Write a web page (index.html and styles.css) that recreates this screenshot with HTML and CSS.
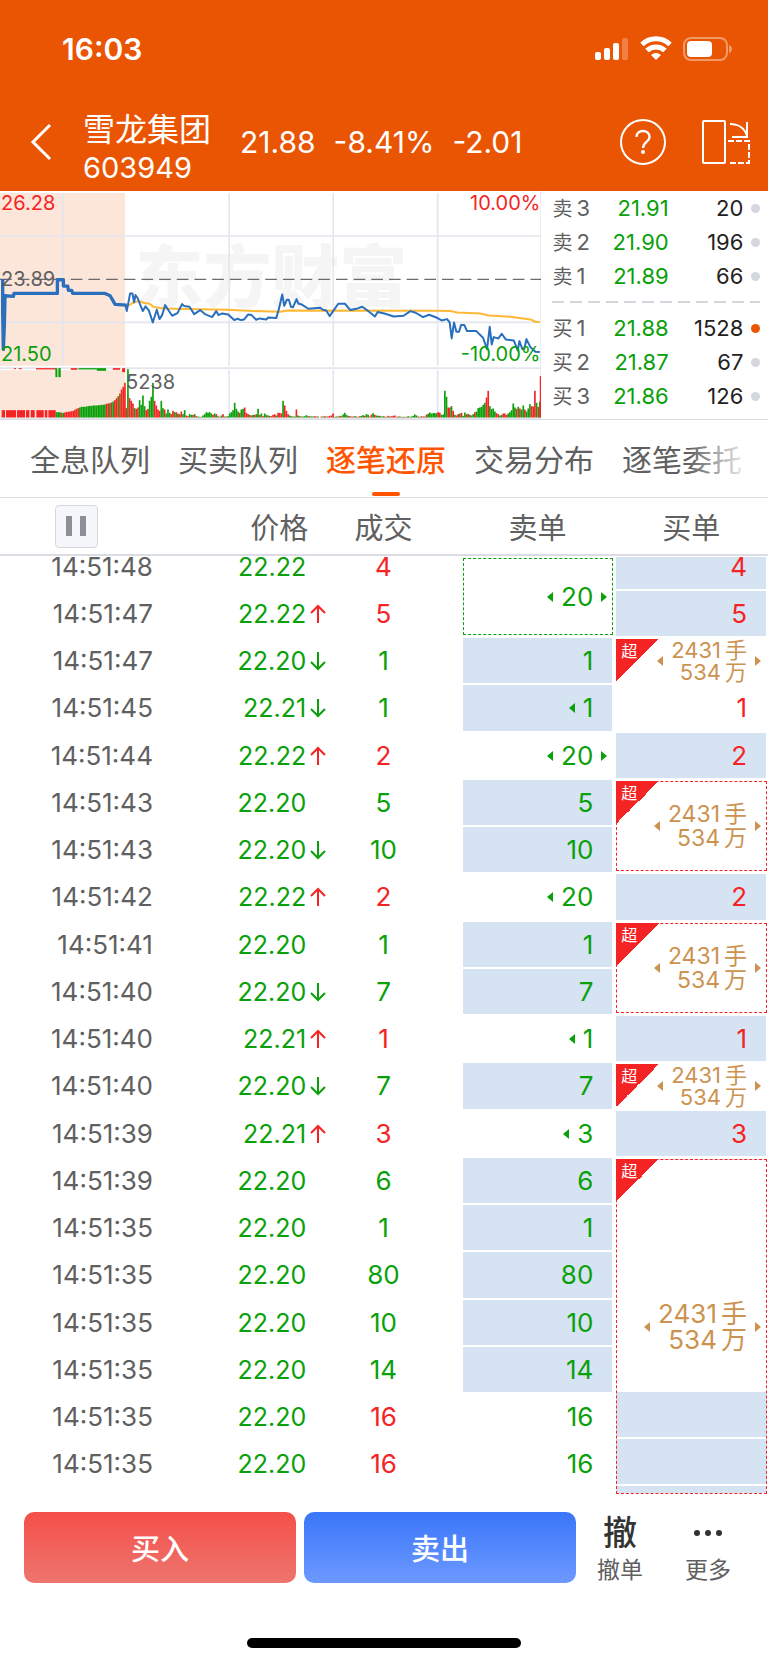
FILE: index.html
```
<!DOCTYPE html>
<html lang="zh-CN">
<head>
  <meta charset="UTF-8">
  <meta name="viewport" content="width=device-width, initial-scale=1.0">
  <title>雪龙集团 603949</title>
  <link rel="stylesheet" href="styles.css">
</head>
<body>
  <svg width="0" height="0" class="symbols" aria-hidden="true">
    <symbol id="up" viewBox="0 0 16 20"><path d="M8 19V2M1 9l7-7 7 7" fill="none" stroke="currentColor" stroke-width="2"/></symbol>
    <symbol id="down" viewBox="0 0 16 20"><path d="M8 1v17M1 11l7 7 7-7" fill="none" stroke="currentColor" stroke-width="2"/></symbol>
  </svg>

  <header class="header">
    <div class="status-bar">
      <span class="clock">16:03</span>
      <svg width="138" height="26" viewBox="0 0 138 26" fill="#fff" aria-hidden="true">
        <rect x="1" y="16" width="6" height="8" rx="2"/>
        <rect x="10" y="12" width="6" height="12" rx="2"/>
        <rect x="19" y="7" width="6" height="17" rx="2"/>
        <rect x="28" y="2" width="6" height="22" rx="2" opacity=".25"/>
        <g fill="none" stroke="#fff" stroke-width="5">
          <path d="M48 8.500a20 20 0 0 1 28 0"/>
          <path d="M53 14.500a13 13 0 0 1 18 0"/>
        </g>
        <path d="M62 24l-5-5a7 7 0 0 1 10 0z"/>
        <rect x="90" y="2" width="43" height="22" rx="7" fill="none" stroke="#fff" stroke-width="2" opacity=".4"/>
        <rect x="93" y="5" width="25" height="16" rx="4"/>
        <path d="M135 9q3 1 3 4t-3 4z" opacity=".4"/>
      </svg>
    </div>
    <div class="title-bar">
      <a class="back" href="#" aria-label="返回">
        <svg width="22" height="38" viewBox="0 0 22 38"><path d="M20 2L3 19l17 17" fill="none" stroke="#fff" stroke-width="3"/></svg>
      </a>
      <h1 class="stock">雪龙集团<span>603949</span></h1>
      <div class="quote"><span>21.88</span><span>-8.41%</span><span>-2.01</span></div>
      <button class="icon-btn" aria-label="帮助">
        <svg width="46" height="46" viewBox="0 0 46 46" fill="none" stroke="#fff" stroke-width="2">
          <circle cx="23" cy="23" r="22"/>
          <path d="M16.500 18c0-8 13-8 13 0 0 5-6.500 5-6.500 11" stroke-width="2.400"/>
          <circle cx="23" cy="33" r="1" fill="#fff"/>
        </svg>
      </button>
      <button class="icon-btn" aria-label="横屏">
        <svg width="48" height="46" viewBox="0 0 48 46" fill="none" stroke="#fff" stroke-width="2">
          <rect x="1" y="2" width="22" height="42" rx="1"/>
          <path d="M28 5c9 0 15 5 17 12M45 3v15H30"/>
          <path d="M26 22h21v22H26" stroke-dasharray="6 2"/>
        </svg>
      </button>
    </div>
  </header>

  <main>
    <section class="market">
      <div class="chart">
        <span class="watermark">东方财富</span>
        <svg viewBox="0 18 1623 684" aria-hidden="true">
          <g fill="#fce5d9">
            <path d="M0 24h375v518H0zM0 555h375v142H0z"/>
          </g>
          <g stroke="#e3e6ee" stroke-width="5">
            <path d="M188 24v518M687 24v518M999 24v518M1312 24v518M687 555v142M999 555v142M1312 555v142"/>
            <path d="M0 153h1623M0 412h1623M0 549h1623M0 700h1623M1622 18v684"/>
          </g>
          <path d="M0 283h1623" stroke="#6b6b6b" stroke-width="4" stroke-dasharray="35 18"/>
          <g id="volume"></g>
          <g fill="none" stroke-linejoin="round">
            <polyline stroke="#ffb833" stroke-width="6" points="385,362 400,352 416,348 430,353 448,356 462,366 490,370 560,372 680,374 760,378 840,380 862,376 1310,377 1350,378 1370,382 1440,385 1465,391 1530,395 1590,403 1605,410 1618,411"/>
            <polyline stroke="#2a6fbd" stroke-width="10" points="8,282 8,380 10,493 13,422 15,332 40,334 42,325 172,325 172,284 190,284 190,303 203,303 205,316 215,316 218,325 315,325 330,332 345,358 380,360"/>
            <polyline stroke="#2a6fbd" stroke-width="6" points="376,360 380,378 390,325 397,325 402,352 406,330 412,338 428,378 436,364 446,376 458,412 470,374 478,402 486,390 495,360 504,374 516,392 532,384 546,357 552,363 568,365 582,387 600,375 616,388 636,396 648,378 655,390 666,385 684,388 702,405 712,401 722,405 732,403 744,388 754,390 768,404 778,400 798,403 804,397 828,399 836,372 846,328 852,362 860,344 866,344 872,365 878,367 889,342 894,355 904,358 924,371 960,368 968,374 978,376 988,393 998,379 1014,356 1034,356 1050,375 1072,370 1086,365 1100,375 1124,394 1132,381 1155,386 1180,394 1210,392 1230,378 1246,383 1268,396 1286,389 1310,398 1324,406 1340,402 1348,412 1354,460 1361,412 1368,440 1376,440 1382,420 1392,420 1400,438 1428,438 1448,458 1460,492 1468,425 1474,478 1480,456 1494,460 1504,446 1516,463 1540,466 1552,496 1557,468 1566,492 1572,490 1578,462 1590,486 1605,500 1618,501"/>
          </g>
        </svg>
        <span class="label high">26.28</span>
        <span class="label mid">23.89</span>
        <span class="label low">21.50</span>
        <span class="label rise">10.00%</span>
        <span class="label fall">-10.00%</span>
        <span class="label vol">5238</span>
      </div>

      <table class="book">
        <colgroup><col class="b-level"><col class="b-value"><col class="b-value"><col class="b-dot"></colgroup>
        <tbody>
          <tr><th>卖<span>3</span></th><td class="green">21.91</td><td>20</td><td><i class="dot"></i></td></tr>
          <tr><th>卖<span>2</span></th><td class="green">21.90</td><td>196</td><td><i class="dot"></i></td></tr>
          <tr><th>卖<span>1</span></th><td class="green">21.89</td><td>66</td><td><i class="dot"></i></td></tr>
          <tr class="split"><td colspan="4"><hr></td></tr>
          <tr><th>买<span>1</span></th><td class="green">21.88</td><td>1528</td><td><i class="dot hot"></i></td></tr>
          <tr><th>买<span>2</span></th><td class="green">21.87</td><td>67</td><td><i class="dot"></i></td></tr>
          <tr><th>买<span>3</span></th><td class="green">21.86</td><td>126</td><td><i class="dot"></i></td></tr>
        </tbody>
      </table>
    </section>

    <nav class="tabs">
      <a href="#">全息队列</a>
      <a href="#">买卖队列</a>
      <a href="#" class="active">逐笔还原</a>
      <a href="#">交易分布</a>
      <a href="#">逐笔委托</a>
    </nav>

    <table class="ticks">
      <colgroup><col class="c-time"><col class="c-price"><col class="c-deal"><col class="c-order"><col class="c-order"></colgroup>
      <thead>
        <tr>
          <th class="time"><button class="pause" aria-label="暂停"></button></th>
          <th class="price">价格</th>
          <th class="deal">成交</th>
          <th>卖单</th>
          <th>买单</th>
        </tr>
      </thead>
      <tbody>
        <tr class="first"><td class="time">14:51:48</td><td class="price">22.22</td><td class="deal red">4</td><td class="group green" rowspan="2"><span class="qty prev next">20</span></td><td class="fill red"><span class="qty">4</span></td></tr>
        <tr><td class="time">14:51:47</td><td class="price">22.22<svg class="red"><use href="#up"/></svg></td><td class="deal red">5</td><td class="fill red"><span class="qty">5</span></td></tr>
        <tr><td class="time">14:51:47</td><td class="price">22.20<svg><use href="#down"/></svg></td><td class="deal green">1</td><td class="fill green"><span class="qty">1</span></td><td class="super"><b class="flag">超</b><span class="qty prev next small"><span>2431<u>手</u><br>534<u>万</u></span></span></td></tr>
        <tr><td class="time">14:51:45</td><td class="price">22.21<svg><use href="#down"/></svg></td><td class="deal green">1</td><td class="fill green"><span class="qty prev">1</span></td><td class="red"><span class="qty">1</span></td></tr>
        <tr><td class="time">14:51:44</td><td class="price">22.22<svg class="red"><use href="#up"/></svg></td><td class="deal red">2</td><td class="green"><span class="qty prev next">20</span></td><td class="fill red"><span class="qty">2</span></td></tr>
        <tr><td class="time">14:51:43</td><td class="price">22.20</td><td class="deal green">5</td><td class="fill green"><span class="qty">5</span></td><td class="group super" rowspan="2"><b class="flag">超</b><span class="qty prev next medium"><span>2431<u>手</u><br>534<u>万</u></span></span></td></tr>
        <tr><td class="time">14:51:43</td><td class="price">22.20<svg><use href="#down"/></svg></td><td class="deal green">10</td><td class="fill green"><span class="qty">10</span></td></tr>
        <tr><td class="time">14:51:42</td><td class="price">22.22<svg class="red"><use href="#up"/></svg></td><td class="deal red">2</td><td class="green"><span class="qty prev">20</span></td><td class="fill red"><span class="qty">2</span></td></tr>
        <tr><td class="time">14:51:41</td><td class="price">22.20</td><td class="deal green">1</td><td class="fill green"><span class="qty">1</span></td><td class="group super" rowspan="2"><b class="flag">超</b><span class="qty prev next medium"><span>2431<u>手</u><br>534<u>万</u></span></span></td></tr>
        <tr><td class="time">14:51:40</td><td class="price">22.20<svg><use href="#down"/></svg></td><td class="deal green">7</td><td class="fill green"><span class="qty">7</span></td></tr>
        <tr><td class="time">14:51:40</td><td class="price">22.21<svg class="red"><use href="#up"/></svg></td><td class="deal red">1</td><td class="green"><span class="qty prev">1</span></td><td class="fill red"><span class="qty">1</span></td></tr>
        <tr><td class="time">14:51:40</td><td class="price">22.20<svg><use href="#down"/></svg></td><td class="deal green">7</td><td class="fill green"><span class="qty">7</span></td><td class="super"><b class="flag">超</b><span class="qty prev next small"><span>2431<u>手</u><br>534<u>万</u></span></span></td></tr>
        <tr><td class="time">14:51:39</td><td class="price">22.21<svg class="red"><use href="#up"/></svg></td><td class="deal red">3</td><td class="green"><span class="qty prev">3</span></td><td class="fill red"><span class="qty">3</span></td></tr>
        <tr><td class="time">14:51:39</td><td class="price">22.20</td><td class="deal green">6</td><td class="fill green"><span class="qty">6</span></td><td class="group super tail" rowspan="8"><b class="flag">超</b><span class="qty prev next large"><span>2431<u>手</u><br>534<u>万</u></span></span></td></tr>
        <tr><td class="time">14:51:35</td><td class="price">22.20</td><td class="deal green">1</td><td class="fill green"><span class="qty">1</span></td></tr>
        <tr><td class="time">14:51:35</td><td class="price">22.20</td><td class="deal green">80</td><td class="fill green"><span class="qty">80</span></td></tr>
        <tr><td class="time">14:51:35</td><td class="price">22.20</td><td class="deal green">10</td><td class="fill green"><span class="qty">10</span></td></tr>
        <tr><td class="time">14:51:35</td><td class="price">22.20</td><td class="deal green">14</td><td class="fill green"><span class="qty">14</span></td></tr>
        <tr><td class="time">14:51:35</td><td class="price">22.20</td><td class="deal red">16</td><td class="green"><span class="qty">16</span></td></tr>
        <tr><td class="time">14:51:35</td><td class="price">22.20</td><td class="deal red">16</td><td class="green"><span class="qty">16</span></td></tr>
        <tr class="last"><td colspan="4"></td></tr>
      </tbody>
    </table>
  </main>

  <footer class="actions">
    <button class="trade buy">买入</button>
    <button class="trade sell">卖出</button>
    <a class="action" href="#"><strong>撤</strong>撤单</a>
    <a class="action" href="#">
      <svg width="34" height="38" viewBox="0 0 34 38" fill="#333" aria-hidden="true"><circle cx="6" cy="19" r="3"/><circle cx="17" cy="19" r="3"/><circle cx="28" cy="19" r="3"/></svg>更多
    </a>
  </footer>
  <div class="home-indicator"></div>

  <script>
    const svgNs = "http://www.w3.org/2000/svg";
    const volume = document.getElementById("volume");
    const colors = { r: "#f52424", g: "#0aa00a", b: "#8a6414" };
    const baseline = 697;

    function addBar(x, y, height, color, width = 5) {
      const bar = document.createElementNS(svgNs, "rect");
      bar.setAttribute("x", x);
      bar.setAttribute("y", y);
      bar.setAttribute("width", width);
      bar.setAttribute("height", height);
      bar.setAttribute("fill", colors[color]);
      volume.appendChild(bar);
    }

    // each run starts at x and puts one bar every 5 units
    function addRun(x, text) {
      text.split(" ").forEach((item, i) => {
        const height = Number(item.slice(1));
        addBar(x + i * 5, baseline - height, height, item[0]);
      });
    }

    // call auction
    [[5, 10], [18, 30], [51, 24], [78, 10], [92, 12], [109, 22], [134, 8], [145, 22]].forEach(([x, w]) => addBar(x, 675, 22, "r", w));
    addRun(167, "g16 g16 g16 r14 g14 r15 r17 r17 r18 r19 r20 r23 r26 r28 g30 g32 g32 g32 g33 g34 g35 g35 g36 g36 g36 g37 g37 g38 g38 g39 r41 r42 g43 r45 g48 r52 r58 b64 b72 r84 r92 r104");
    [[42, 6, 3], [56, 9, 3], [108, 60, 4], [212, 20, 5], [338, 22, 5]].forEach(([x, w, h]) => addBar(x, 549, h, "r", w));
    [[166, 6, 27], [175, 7, 27], [235, 55, 4], [290, 28, 8]].forEach(([x, w, h]) => addBar(x, 549, h, "g", w));
    addBar(366, 549, 12, "r", 9);

    // trading session
    addRun(376, "r28 g145 r58 r50 r42 g28 r26 r30 g52 g38 g66 g34 r22 r26 g50 g62 g104 r50 r36 r24 r20 g50 g28 r24 g12 g24 g14 r10 r20 g16 r16 g12 r10 r18 g10 g22 r6 r4 g10 g8 r8 g10 r4 g3 g2 r2 g6 g10 g16 g14 g16 g12 r8 g12 r10 g4 r2 g6 r10 g3 r3 g4 g12 g16 g22 g44 g26 g18 r14 g24 g26 r30 r14 r10 g8 r6 g8 r8 g10 g26 r8 g12 r4 g12 g8 r6 g5 r4 r8 r10 g6 r14 r14 r12 g50 r36 r20 r10 g6 g4 g3 g3 r24 g6 g4 r3 g3 g4 g7 g4 r4 g3 g3 r4 r3 g3");
    addRun(961, "r3 g3 r4 g3 r3 r5 r6 r12 g2 g3 r3 g5 r4 g9 g14 g8 r5 g4 r3 r3 g4 g3 r2 r4 g5 g7 r5 g10 g8 r3 r9 g13 r8 g6 g5 r5 g3 g4 r3 g2 r5 g3 r4 r5 r6 g2 r3 g3 r2 g2 g2 r2 g4 r2 g3 g5 g9 g6 r3 g2 r4 r3 g3 r9 g11 g15 g12 g13 g13 g13 r16 r14 g8 g9 g80 g62 r30 r30 g34 r20 g8 r6 r10 g12 r14 g5 g15 r10 g11 r8 g6 g10 r16 g18 g28 g30 g32 g38 g44 r60 r80 g34 g25 g27 g18 r13 r10 g6 g8 r12 r12 r8 g12 g16 g22 g42 g30 r26 g32 r27 g24 g36 r24 g18 g27 g40 r34 r33 r80 g44 r32 g48 g88 g94 g108");
    addBar(1618, 573, 124, "r");
  </script>
</body>
</html>
```
FILE: styles.css
```
*,
*::before,
*::after {
  box-sizing: border-box;
}

body {
  margin: 0;
  background: #fff;
  color: #606060;
  font-family: Inter, "Noto Sans CJK SC", sans-serif;
  font-size: 26px;
}

a {
  color: inherit;
  text-decoration: none;
}

button {
  font-family: inherit;
  border: none;
  cursor: pointer;
}

table {
  border-collapse: separate;
  border-spacing: 0;
  table-layout: fixed;
}

th {
  font-weight: 400;
}

.symbols {
  position: absolute;
}

.red {
  color: #f52424;
}

.green {
  color: #0aa00a;
}

/* header */
.header {
  background: #ea5504;
  color: #fff;
}

.status-bar {
  display: flex;
  justify-content: space-between;
  align-items: center;
  height: 98px;
  padding: 0 36px 0 62px;
}

.clock {
  font-size: 30px;
  font-weight: 600;
}

.title-bar {
  display: flex;
  align-items: center;
  height: 93px;
  padding: 0 18px 6px 30px;
}

.back {
  display: flex;
  margin-right: 31px;
}

.stock {
  margin: 12px 0 0;
  font-size: 32px;
  font-weight: 400;
  line-height: 40px;
}

.stock span {
  display: block;
  font-size: 29px;
  line-height: 36px;
}

.quote {
  display: flex;
  flex: 1;
  gap: 18px;
  margin-left: 29px;
  font-size: 30px;
}

.icon-btn {
  display: flex;
  margin-left: 34px;
  padding: 0;
  background: none;
}

.icon-btn:last-child {
  margin-left: 36px;
}

/* chart and order book */
.market {
  display: flex;
  align-items: flex-start;
  border-bottom: 1px solid #dcdce4;
}

.chart {
  position: relative;
  width: 70.5%;
}

.chart svg {
  position: relative;
  display: block;
  width: 100%;
}

.watermark {
  position: absolute;
  top: 36px;
  left: 25%;
  color: #f5f5f5;
  font-size: 68px;
  font-weight: 900;
  line-height: 100px;
}

.label {
  position: absolute;
  left: 1px;
  font-size: 20px;
  line-height: 24px;
}

.label.high {
  top: 0;
  color: #f52424;
}

.label.mid {
  top: 76px;
}

.label.low {
  top: 151px;
  color: #0aa00a;
}

.label.rise {
  top: 0;
  right: 1px;
  left: auto;
  color: #f52424;
}

.label.fall {
  top: 151px;
  right: 1px;
  left: auto;
  color: #0aa00a;
}

.label.vol {
  top: 179px;
  left: 126px;
}

.book {
  width: 29.5%;
  padding: 0 8px 0 11px;
  color: #222;
  font-size: 22px;
  text-align: right;
}

.b-level {
  width: 20%;
}

.b-value {
  width: 36%;
}

.b-dot {
  width: 8%;
}

.book tr {
  height: 34px;
}

.book th,
.book td {
  padding: 0;
  line-height: 32px;
}

.book th {
  color: #606060;
  font-size: 20px;
  text-align: left;
}

.book th span {
  padding-left: 4px;
  font-size: 22px;
}

.book .green {
  color: #0aa00a;
}

.book .split {
  height: 18px;
}

.book .split td {
  line-height: 2px;
}

.book hr {
  height: 2px;
  margin: 0;
  border: none;
  background: repeating-linear-gradient(90deg, #d5d5de 0 12px, transparent 12px 18px);
}

.dot {
  display: block;
  width: 9px;
  height: 9px;
  margin-left: auto;
  border-radius: 50%;
  background: #d4d7de;
}

.dot.hot {
  background: #ea5504;
}

/* tabs */
.tabs {
  position: relative;
  display: flex;
  gap: 28px;
  height: 77px;
  padding-left: 30px;
  overflow: hidden;
  font-size: 30px;
  line-height: 80px;
  white-space: nowrap;
}

.tabs::after {
  content: "";
  position: absolute;
  top: 0;
  right: 0;
  width: 80px;
  height: 100%;
  background: linear-gradient(90deg, transparent, #fff 80%);
}

.tabs a {
  position: relative;
}

.tabs .active {
  color: #ff5500;
  font-weight: 500;
}

.tabs .active::after {
  content: "";
  position: absolute;
  bottom: 1px;
  left: 50%;
  width: 28px;
  height: 4px;
  margin-left: -14px;
  border-radius: 2px;
  background: #ff5500;
}

/* tick list */
.ticks {
  width: 100%;
}

.c-time {
  width: 22%;
}

.c-price {
  width: 21%;
}

.c-deal {
  width: 17%;
}

.c-order {
  width: 20%;
}

.ticks th {
  height: 59px;
  padding: 0;
  border-top: 1px solid #dcdce4;
  border-bottom: 2px solid #dcdce4;
  font-size: 29px;
}

.ticks tbody tr {
  height: 47px;
}

.ticks tbody tr:nth-child(4n) {
  height: 48px;
}

.ticks td {
  position: relative;
  padding: 0;
  border: solid transparent;
  border-width: 1px 2px;
  background-clip: padding-box;
  line-height: 32px;
}

.ticks .time {
  padding-right: 14px;
  text-align: right;
}

.ticks th.time {
  padding-right: 71px;
}

.ticks .price {
  padding-right: 22px;
  text-align: right;
}

.ticks td.price {
  color: #0aa00a;
  font-size: 25px;
}

/* the arrow hangs in the padding so that the prices stay aligned */
.price svg {
  width: 16px;
  height: 20px;
  margin: 0 -20px 0 4px;
  vertical-align: -1px;
}

.ticks .deal {
  padding-right: 24px;
  text-align: center;
}

.ticks .fill {
  background-color: #d6e3f3;
}

.ticks .first {
  height: 34px;
}

.ticks .first td {
  line-height: 20px;
  vertical-align: top;
}

.ticks .first .group {
  vertical-align: middle;
}

.ticks .last,
.ticks .last td {
  height: 8px;
  line-height: 4px;
}

.group::before {
  content: "";
  position: absolute;
  inset: 1px -1px 1px 0;
  border: 1px dashed;
}

.super {
  color: #cc9250;
}

.super::before {
  border-color: #f52424;
}

.tail::before {
  background: linear-gradient(0deg, #d6e3f3 7px, #fff 7px 9px, #d6e3f3 9px 54px, #fff 54px 56px, #d6e3f3 56px 101px, transparent 101px);
}

.qty {
  position: relative;
  display: flex;
  justify-content: flex-end;
  align-items: center;
  gap: 8px;
  padding-right: 5px;
  text-align: right;
}

.qty::before,
.qty::after {
  content: "";
  border: solid transparent;
  border-width: 5px 0 5px 6px;
}

.qty::before {
  border-width: 5px 6px 5px 0;
}

.qty.prev::before {
  border-right-color: currentColor;
}

.qty.next::after {
  border-left-color: currentColor;
}

.qty u {
  margin-left: 4px;
  text-decoration: none;
}

.small {
  font-size: 22px;
  line-height: 22px;
}

.medium {
  font-size: 23px;
  line-height: 24px;
}

.large {
  font-size: 26px;
  line-height: 26px;
}

.flag {
  position: absolute;
  top: 1px;
  left: 0;
  width: 43px;
  height: 43px;
  padding: 3px 0 0 5px;
  background: linear-gradient(135deg, #f52424 50%, transparent 50%);
  color: #fff;
  font-size: 16px;
  font-weight: 400;
  line-height: 18px;
}

.pause {
  display: flex;
  justify-content: center;
  align-items: center;
  width: 43px;
  height: 43px;
  margin-left: auto;
  border: 1px solid #d5d7de;
  border-radius: 4px;
  background: #f6f7fa;
}

.pause::before {
  content: "";
  width: 20px;
  height: 20px;
  border: solid #8e8e96;
  border-width: 0 6px;
}

/* bottom bar */
.actions {
  display: flex;
  align-items: center;
  margin-top: 10px;
  padding: 0 16px 0 24px;
}

.trade {
  flex: 1;
  height: 71px;
  border-radius: 10px;
  color: #fff;
  font-size: 29px;
  font-weight: 500;
}

.buy {
  margin-right: 8px;
  background: linear-gradient(#f54f49, #ed756e);
}

.sell {
  background: linear-gradient(#3b76f9, #6c99ff);
}

.action {
  display: flex;
  flex-direction: column;
  align-items: center;
  width: 88px;
  padding-top: 8px;
  font-size: 23px;
  line-height: 36px;
}

.action strong {
  color: #333;
  font-size: 34px;
  font-weight: 500;
  line-height: 38px;
}

.home-indicator {
  width: 274px;
  height: 10px;
  margin: 50px auto 17px;
  border-radius: 5px;
  background: #000;
}
```
